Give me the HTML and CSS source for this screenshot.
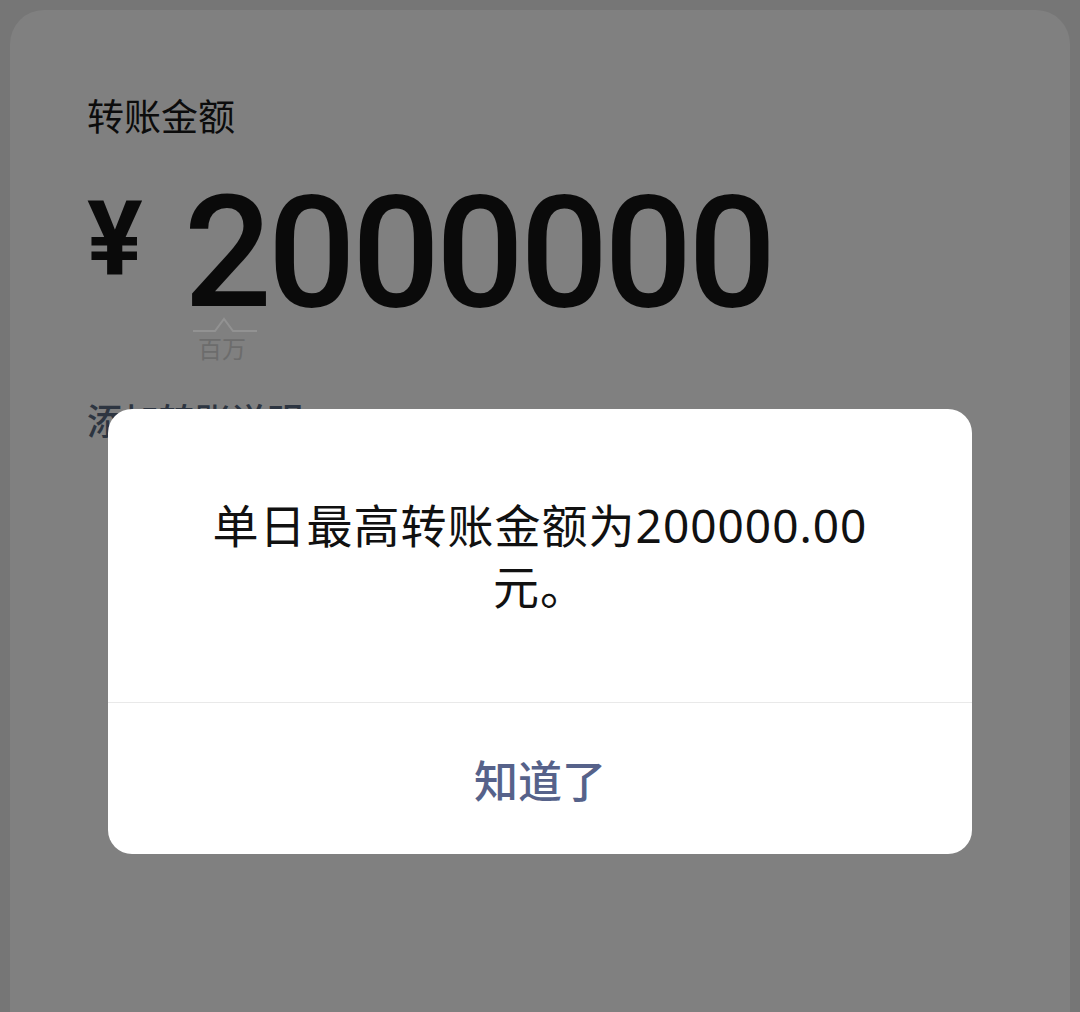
FILE: index.html
```html
<!DOCTYPE html>
<html lang="zh-CN">
<head>
<meta charset="utf-8">
<title>转账</title>
<link rel="stylesheet" href="styles.css">
</head>
<body>
<div class="page">
  <div class="label">转账金额</div>
  <div class="amount-row">
    <span class="yen">¥</span>
    <span class="amount">2000000</span>
  </div>
  <div class="unit">
    <svg class="unit-mark" width="70" height="22" viewBox="0 0 70 22">
      <path d="M2 17 H24 L33 5 L42 17 H66" fill="none" stroke="#929292" stroke-width="2"/>
    </svg>
    <div class="unit-text">百万</div>
  </div>
  <div class="note">添加转账说明</div>
</div>

<div class="dialog">
  <div class="dialog-msg">单日最高转账金额为200000.00元。</div>
  <div class="dialog-btn">知道了</div>
</div>
</body>
</html>
```
FILE: styles.css
```css
html, body {
  margin: 0;
  padding: 0;
}
body {
  background: #767676;
  width: 1080px;
  height: 1012px;
  overflow: hidden;
  font-family: "Noto Sans", "Noto Sans CJK SC", sans-serif;
  padding-top: 10px;
  box-sizing: border-box;
}
.page {
  margin: 0 10px;
  background: #808080;
  border-radius: 34px 34px 0 0;
  height: 1002px;
  padding: 80px 0 0 77px;
  box-sizing: border-box;
}
.label {
  font-size: 37px;
  line-height: 50px;
  color: #0c0c0c;
  font-family: "Noto Sans CJK SC", sans-serif;
}
.amount-row {
  display: flex;
  align-items: flex-start;
  margin-top: 35px;
  height: 140px;
}
.yen {
  font-family: Roboto, "Noto Sans", sans-serif;
  font-weight: 700;
  font-size: 104px;
  line-height: 1;
  margin-top: 12px;
  color: #0a0a0a;
}
.amount {
  font-family: Roboto, "Noto Sans", sans-serif;
  font-weight: 500;
  font-size: 155px;
  line-height: 140px;
  margin-top: 8px;
  color: #0a0a0a;
  margin-left: 41px;
  letter-spacing: -4px;
}
.unit {
  margin-left: 104px;
  margin-top: -1px;
  width: 70px;
}
.unit-mark {
  display: block;
}
.unit-text {
  font-family: "Noto Sans CJK SC", sans-serif;
  font-size: 24px;
  line-height: 28px;
  color: #6c6c6c;
  margin-left: 7px;
  margin-top: -2px;
}
.note {
  margin-top: 32px;
  font-family: "Noto Sans CJK SC", sans-serif;
  font-weight: 500;
  font-size: 36px;
  line-height: 50px;
  color: #2d3541;
}
.dialog {
  position: absolute;
  left: 108px;
  top: 409px;
  width: 864px;
  height: 445px;
  background: #ffffff;
  border-radius: 24px;
  display: flex;
  flex-direction: column;
  overflow: hidden;
}
.dialog-msg {
  height: 294px;
  box-sizing: border-box;
  padding: 0 96px;
  display: flex;
  align-items: center;
  justify-content: center;
  text-align: center;
  font-family: "Noto Sans", "Noto Sans CJK SC", sans-serif;
  font-size: 46px;
  letter-spacing: 1px;
  line-height: 61px;
  color: #111111;
  border-bottom: 1px solid #e9e9e9;
}
.dialog-btn {
  flex: 1;
  display: flex;
  align-items: center;
  justify-content: center;
  font-family: "Noto Sans CJK SC", sans-serif;
  font-weight: 500;
  font-size: 44px;
  color: #56628a;
}
```
